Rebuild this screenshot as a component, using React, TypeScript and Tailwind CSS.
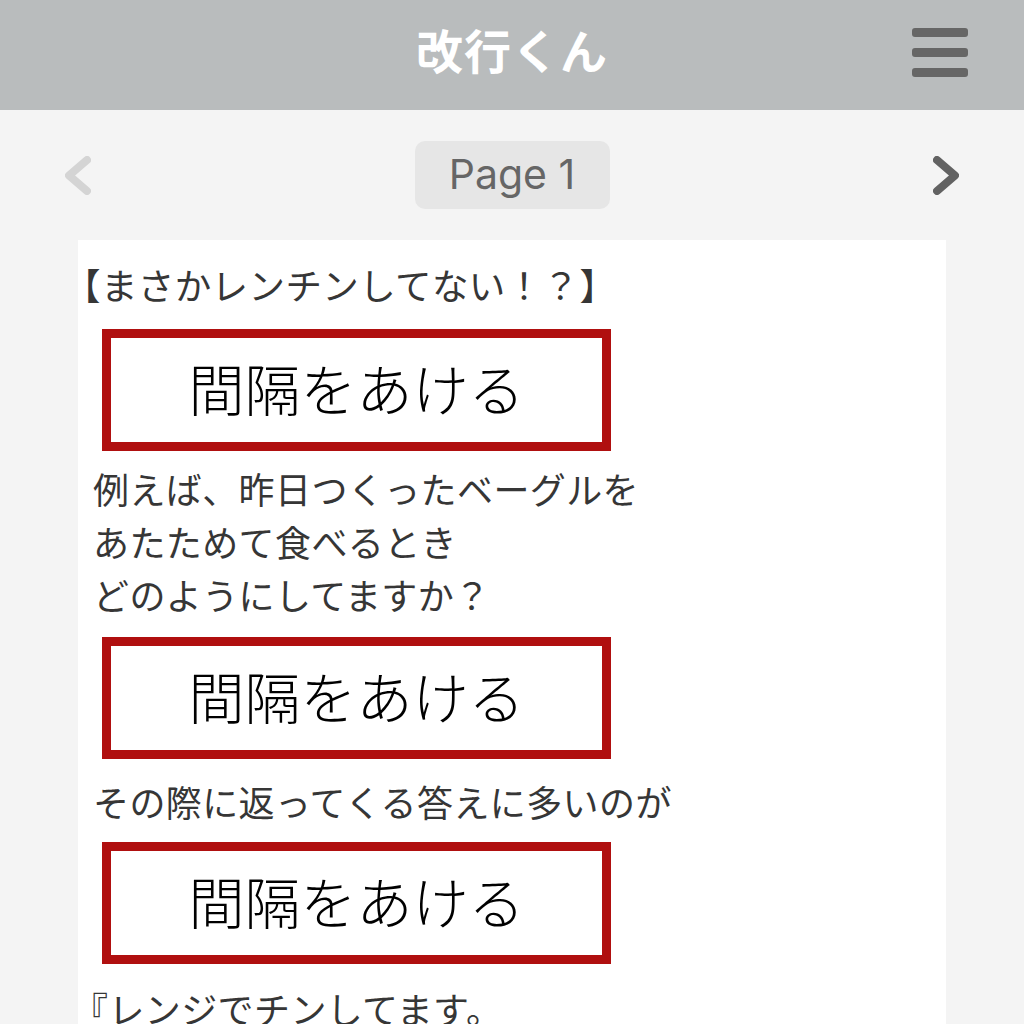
import { Fragment } from "react";

const jp = { fontFamily: '"Noto Sans CJK JP", "Noto Sans", sans-serif' };

type Block = { text: string[]; box?: boolean; className?: string };

const blocks: Block[] = [
  { text: ["間隔をあける"], box: true, className: "mt-[14px] mb-[15px]" },
  { text: ["例えば、昨日つくったベーグルを", "あたためて食べるとき", "どのようにしてますか？"], className: "pl-[15px]" },
  { text: ["間隔をあける"], box: true, className: "mt-[12px] mb-[20px]" },
  { text: ["その際に返ってくる答えに多いのが"], className: "pl-[15px]" },
  { text: ["間隔をあける"], box: true, className: "mt-[10px] mb-[22px]" },
  { text: ["『レンジでチンしてます。"], className: "-ml-[6px]" },
];

function Chevron({ dir, color }: { dir: "left" | "right"; color: string }) {
  return (
    <svg width="26" height="39" viewBox="0 0 26 39" fill="none">
      <polyline
        points={dir === "left" ? "22,4 4,19.5 22,35" : "4,4 22,19.5 4,35"}
        stroke={color}
        strokeWidth="8"
        strokeLinecap="round"
        strokeLinejoin="round"
      />
    </svg>
  );
}

export default function App() {
  return (
    <div className="h-[1024px] overflow-hidden bg-[#f4f4f4]" style={jp}>
      {/* Header */}
      <header className="relative flex h-[110px] items-center justify-center bg-[#b9bcbd]">
        <h1 className="pb-[12px] text-[47px] font-bold tracking-[1px] text-white">改行くん</h1>
        <button className="absolute right-[56px] top-[28px] flex flex-col gap-[11px]">
          <span className="block h-[9px] w-[56px] rounded-[3px] bg-[#666]" />
          <span className="block h-[9px] w-[56px] rounded-[3px] bg-[#666]" />
          <span className="block h-[9px] w-[56px] rounded-[3px] bg-[#666]" />
        </button>
      </header>

      {/* Pager */}
      <div className="mt-[31px] flex items-center justify-between px-[65px]">
        <Chevron dir="left" color="#d4d4d4" />
        <div
          className="flex h-[68px] w-[195px] items-center justify-center rounded-[10px] bg-[#e6e6e6] text-[41px] text-[#666]"
          style={{ fontFamily: 'Inter, "Liberation Sans", sans-serif' }}
        >
          Page 1
        </div>
        <Chevron dir="right" color="#626262" />
      </div>

      {/* Content */}
      <div className="mx-[78px] mt-[31px] flex flex-col items-start bg-white pt-[22px] pb-10 text-[36px] leading-[53px] tracking-[0.4px] text-[#363636]">
        <p className="-ml-[14px] -mt-[4px] mb-[4px] text-[36.5px]">【まさかレンチンしてない！？】</p>
        {blocks.map((b, i) => (
          <Fragment key={i}>
            {b.box ? (
              <div
                className={`ml-[24px] flex h-[122px] w-[509px] items-center justify-center border-[9px] border-[#b00f0f] pb-[8px] text-[56px] font-light tracking-normal text-black ${b.className}`}
              >
                {b.text[0]}
              </div>
            ) : (
              <p className={`-mt-[4px] mb-[4px] ${b.className}`}>
                {b.text.map((t, j) => (
                  <span key={j} className="block">
                    {t}
                  </span>
                ))}
              </p>
            )}
          </Fragment>
        ))}
      </div>
    </div>
  );
}
